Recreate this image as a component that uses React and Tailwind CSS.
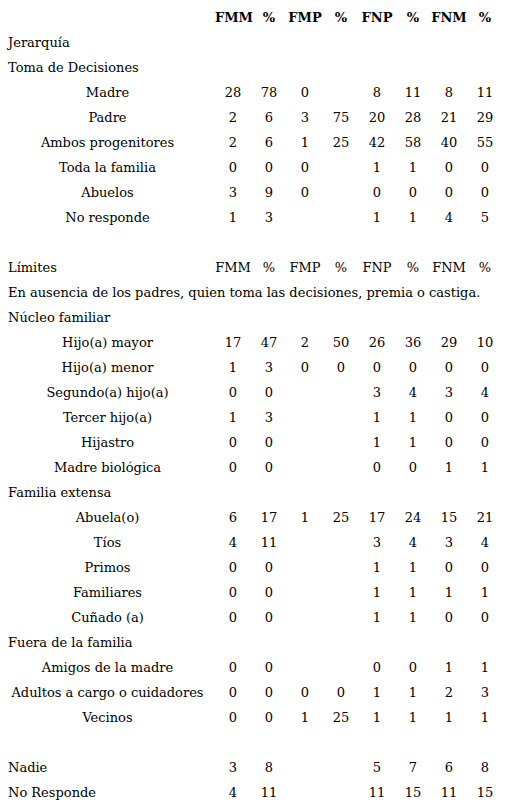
import React from "react";

const heads = ["FMM", "%", "FMP", "%", "FNP", "%", "FNM", "%"];

// kind: "head" | "title" | "item" | "left" | "note" | "blank"
const rows = [
  { kind: "head", label: "", cells: heads, bold: true },
  { kind: "title", label: "Jerarquía" },
  { kind: "title", label: "Toma de Decisiones" },
  { kind: "item", label: "Madre", cells: ["28", "78", "0", "", "8", "11", "8", "11"] },
  { kind: "item", label: "Padre", cells: ["2", "6", "3", "75", "20", "28", "21", "29"] },
  { kind: "item", label: "Ambos progenitores", cells: ["2", "6", "1", "25", "42", "58", "40", "55"] },
  { kind: "item", label: "Toda la familia", cells: ["0", "0", "0", "", "1", "1", "0", "0"] },
  { kind: "item", label: "Abuelos", cells: ["3", "9", "0", "", "0", "0", "0", "0"] },
  { kind: "item", label: "No responde", cells: ["1", "3", "", "", "1", "1", "4", "5"] },
  { kind: "blank" },
  { kind: "left", label: "Límites", cells: heads },
  { kind: "note", label: "En ausencia de los padres, quien toma las decisiones, premia o castiga." },
  { kind: "title", label: "Núcleo familiar" },
  { kind: "item", label: "Hijo(a) mayor", cells: ["17", "47", "2", "50", "26", "36", "29", "10"] },
  { kind: "item", label: "Hijo(a) menor", cells: ["1", "3", "0", "0", "0", "0", "0", "0"] },
  { kind: "item", label: "Segundo(a) hijo(a)", cells: ["0", "0", "", "", "3", "4", "3", "4"] },
  { kind: "item", label: "Tercer hijo(a)", cells: ["1", "3", "", "", "1", "1", "0", "0"] },
  { kind: "item", label: "Hijastro", cells: ["0", "0", "", "", "1", "1", "0", "0"] },
  { kind: "item", label: "Madre biológica", cells: ["0", "0", "", "", "0", "0", "1", "1"] },
  { kind: "title", label: "Familia extensa" },
  { kind: "item", label: "Abuela(o)", cells: ["6", "17", "1", "25", "17", "24", "15", "21"] },
  { kind: "item", label: "Tíos", cells: ["4", "11", "", "", "3", "4", "3", "4"] },
  { kind: "item", label: "Primos", cells: ["0", "0", "", "", "1", "1", "0", "0"] },
  { kind: "item", label: "Familiares", cells: ["0", "0", "", "", "1", "1", "1", "1"] },
  { kind: "item", label: "Cuñado (a)", cells: ["0", "0", "", "", "1", "1", "0", "0"] },
  { kind: "title", label: "Fuera de la familia" },
  { kind: "item", label: "Amigos de la madre", cells: ["0", "0", "", "", "0", "0", "1", "1"] },
  { kind: "item", label: "Adultos a cargo o cuidadores", cells: ["0", "0", "0", "0", "1", "1", "2", "3"] },
  { kind: "item", label: "Vecinos", cells: ["0", "0", "1", "25", "1", "1", "1", "1"] },
  { kind: "blank" },
  { kind: "left", label: "Nadie", cells: ["3", "8", "", "", "5", "7", "6", "8"] },
  { kind: "left", label: "No Responde", cells: ["4", "11", "", "", "11", "15", "11", "15"] },
];

const Row = ({ row }) => {
  if (row.kind === "blank") return <div className="h-[25px]" />;

  if (row.kind === "title" || row.kind === "note") {
    return (
      <div className="h-[25px] flex items-center pl-2 whitespace-nowrap">
        {row.label}
      </div>
    );
  }

  return (
    <div className="h-[25px] grid grid-cols-[215px_repeat(8,36px)] items-center">
      <div
        className={
          row.kind === "item"
            ? "text-center whitespace-nowrap"
            : "pl-2 whitespace-nowrap"
        }
      >
        {row.label}
      </div>
      {row.cells.map((c, i) => (
        <div
          key={i}
          className={row.bold ? "text-center font-bold" : "text-center"}
        >
          {c}
        </div>
      ))}
    </div>
  );
};

export default function App() {
  return (
    <div className="w-[506px] min-h-[808px] bg-white text-black pt-[5px] font-['DejaVu_Serif',serif] text-[13px]">
      {rows.map((row, i) => (
        <Row key={i} row={row} />
      ))}
    </div>
  );
}
